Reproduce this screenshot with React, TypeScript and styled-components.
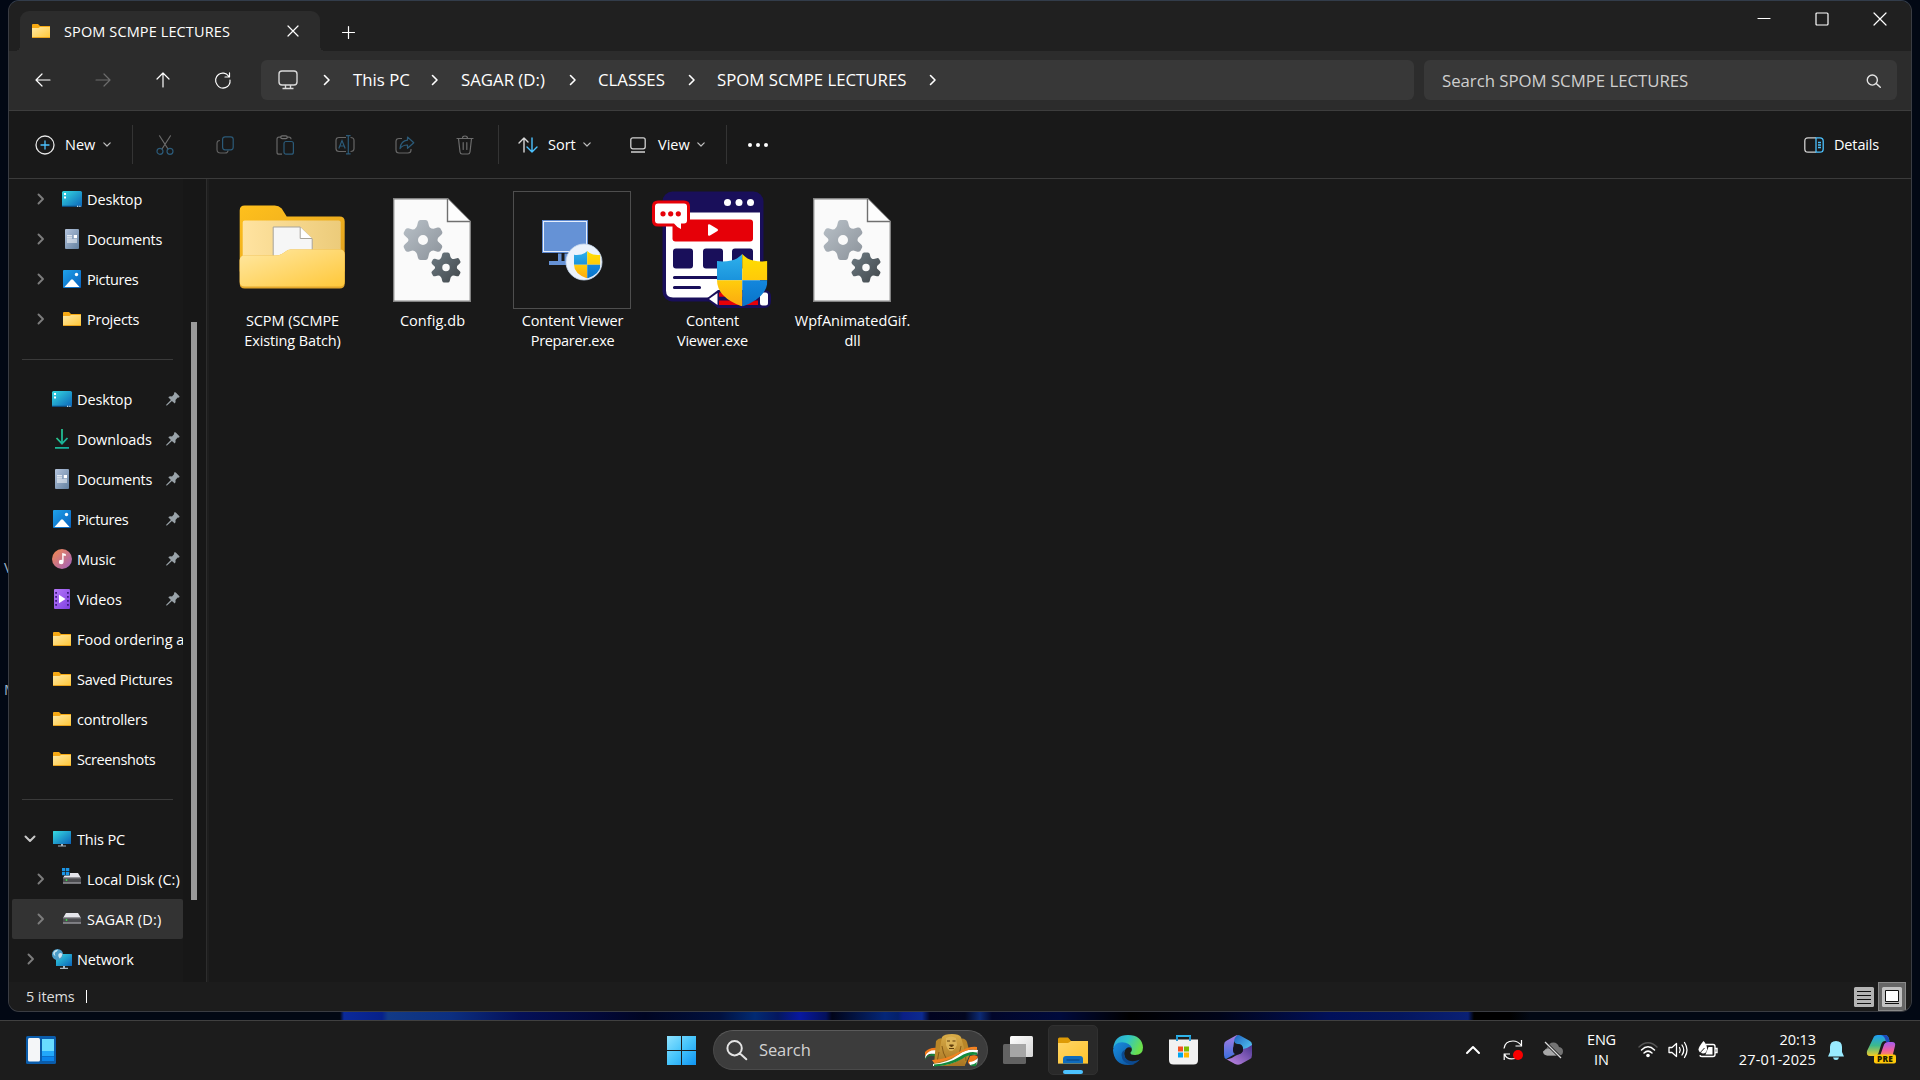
import React from 'react';
import styled, { createGlobalStyle } from 'styled-components';

const Global = createGlobalStyle`
  * { box-sizing: border-box; }
  body { margin: 0; background: #020814; overflow: hidden; }
  svg { display: block; flex: none; overflow: visible; }
`;

/* ---------- shell ---------- */
const Screen = styled.div`
  position: relative;
  width: 1920px;
  height: 1080px;
  display: flex;
  flex-direction: column;
  overflow: hidden;
  font-family: 'Open Sans', 'Noto Sans', sans-serif;
  font-size: 14.5px;
  color: #fff;
  background:
    linear-gradient(90deg, transparent 340px, #0b2a9a 344px, #06208a 382px, #123a86 388px, #0c2f80 450px,
      #041058 520px, #020838 600px, #000522 645px, #01113f 720px, #022a72 755px, #04175e 778px, #0818a0 800px,
      #03105c 826px, #010418 832px, #042678 885px, #03206a 898px, #0b1f86 903px, #0c2a90 922px, #010320 930px,
      #02061f 965px, #0c2a74 980px, #01062a 992px, #000a3c 1060px, #000 1130px, #000419 1220px, #01105a 1330px,
      #04165e 1400px, #0a2074 1468px, #000 1474px, #000 1510px, #020814 1530px, transparent 1560px) 0 1012px / 100% 8px no-repeat,
    #020814;
`;
const DesktopLabel = styled.span<{ $top: number }>`
  position: absolute;
  left: 4px;
  top: ${p => p.$top}px;
  line-height: 18px;
  color: #9fb4c8;
`;
const Window = styled.div`
  position: relative;
  margin-left: 8px;
  width: 1904px;
  height: 1012px;
  border: 1px solid #3a3c42;
  border-top-color: #323c4a;
  border-radius: 11px;
  overflow: hidden;
  display: flex;
  flex-direction: column;
  background: #191919;
`;
const Label = styled.span<{ $ls?: number; $size?: number; $color?: string; $weight?: number }>`
  white-space: nowrap;
  letter-spacing: ${p => p.$ls ?? 0}px;
  font-size: ${p => p.$size ?? 14.5}px;
  color: ${p => p.$color ?? '#fff'};
  font-weight: ${p => p.$weight ?? 400};
  line-height: 20px;
`;
const TabLabel = styled(Label)`padding-top: 1px;`;

/* ---------- title bar ---------- */
const TitleBar = styled.div`
  height: 50px;
  flex: none;
  display: flex;
  align-items: flex-start;
  background: #202020;
  padding-left: 11px;
`;
const Tab = styled.div`
  position: relative;
  margin-top: 10px;
  width: 300px;
  height: 40px;
  border-radius: 9px 9px 0 0;
  background: #2c2c2c;
  display: flex;
  align-items: center;
  padding: 0 21px 0 12px;
  gap: 14px;
  &::before, &::after {
    content: '';
    position: absolute;
    bottom: 0;
    width: 5px;
    height: 5px;
  }
  &::before { left: -5px; background: radial-gradient(circle at 0 0, transparent 5px, #2c2c2c 5px); }
  &::after { right: -5px; background: radial-gradient(circle at 100% 0, transparent 5px, #2c2c2c 5px); }
`;
const Spacer = styled.div`flex: 1;`;
const NewTab = styled.div`margin: 25px 0 0 22px;`;
const Caption = styled.div`
  display: flex;
  gap: 44px;
  margin: 11px 24px 0 0;
`;

/* ---------- address row ---------- */
const NavRow = styled.div`
  height: 60px;
  flex: none;
  background: #2c2c2c;
  border-bottom: 1px solid #3d3d3d;
  display: flex;
  align-items: center;
  padding-right: 14px;
`;
const NavButtons = styled.div`
  display: flex;
  width: 252px;
  padding: 0 0 1px 4px;
`;
const NavButton = styled.div`
  width: 60px;
  height: 40px;
  display: grid;
  place-items: center;
`;
const Field = styled.div<{ $w: number }>`
  width: ${p => p.$w}px;
  height: 40px;
  margin-bottom: 1px;
  border-radius: 6px;
  background: #383838;
  display: flex;
  align-items: center;
`;
const AddressField = styled(Field)`padding-left: 17px; margin-right: 10px;`;
const SearchField = styled(Field)`padding: 1px 16px 0 18px; justify-content: space-between;`;
const DeviceIcon = styled.svg`margin-right: 25px;`;
const Crumb = styled.span<{ $w: number }>`
  width: ${p => p.$w}px;
  font-size: 16.8px;
  line-height: 24px;
  white-space: nowrap;
`;
const CrumbArrow = styled.span<{ $gap: number }>`margin-right: ${p => p.$gap}px;`;

/* ---------- command bar ---------- */
const CommandBar = styled.div`
  height: 68px;
  flex: none;
  background: #191919;
  border-bottom: 1px solid #3b3b3b;
  display: flex;
  align-items: center;
  padding: 0 33px 0 26px;
`;
const Command = styled.div<{ $w: number; $gap: number }>`
  width: ${p => p.$w}px;
  display: flex;
  align-items: center;
  gap: ${p => p.$gap}px;
`;
const CommandText = styled(Label)<{ $pull?: number }>`
  padding-top: 1px;
  margin-right: -${p => p.$pull ?? 3}px;
`;
const Divider = styled.div<{ $after: number }>`
  width: 1px;
  height: 39px;
  background: #343434;
  margin-right: ${p => p.$after}px;
`;
const IconCommands = styled.div`
  display: flex;
  width: 365px;
  padding-left: 2px;
`;
const IconCell = styled.div`
  width: 60px;
  height: 24px;
  display: grid;
  place-items: center;
`;

/* ---------- body ---------- */
const Body = styled.div`
  flex: 1;
  display: flex;
  min-height: 0;
`;
const Sidebar = styled.div`
  width: 174px;
  padding-left: 3px;
  flex: none;
  overflow: hidden;
`;
const SideRow = styled.div<{ $on?: boolean }>`
  height: 40px;
  width: 171px;
  border-radius: 2px;
  background: ${p => (p.$on ? '#333333' : 'transparent')};
  display: flex;
  align-items: center;
  overflow: hidden;
`;
const SideText = styled(Label)`padding-top: 2px;`;
const Expander = styled.span<{ $nested?: boolean; $open?: boolean }>`
  width: ${p => (p.$nested ? 50 : 40)}px;
  padding-left: ${p => (p.$nested ? 25 : p.$open ? 12 : 15)}px;
  flex: none;
`;
const IconSlot = styled.span`
  width: 20px;
  height: 22px;
  margin: -1px 5px 0 0;
  flex: none;
  display: grid;
  place-items: center;
`;
const Pin = styled.span`margin: 0 3px 0 auto;`;
const Rule = styled.div`
  height: 40px;
  padding: 20px 10px 0 10px;
  width: 171px;
  &::after { content: ''; display: block; height: 1px; background: #3a3a3a; }
`;
const ScrollTrack = styled.div`
  width: 23px;
  background: #171717;
  padding: 143px 0 0 8px;
`;
const Thumb = styled.div`
  width: 6px;
  height: 578px;
  background: #9a9a9a;
`;
const Splitter = styled.div`
  width: 3px;
  background: #1e1e1e;
  border-left: 1px solid #2d2d2d;
`;
const Files = styled.div`
  display: flex;
  padding: 12px 0 0 13px;
`;
const File = styled.div`
  width: 140px;
  display: flex;
  flex-direction: column;
  align-items: center;
`;
const FileText = styled(Label)`padding-left: 1px;`;
const Thumbnail = styled.div<{ $framed?: boolean }>`
  width: 118px;
  height: 118px;
  border: 1px solid ${p => (p.$framed ? '#4e4e4e' : 'transparent')};
  margin-bottom: 2px;
  display: grid;
  place-items: center;
`;

/* ---------- status bar ---------- */
const StatusBar = styled.div`
  height: 29px;
  flex: none;
  background: #1c1c1c;
  display: flex;
  align-items: center;
  padding-left: 17px;
`;
const Caret = styled.div`width: 1px; height: 13px; margin-left: 11px; background: #fff;`;
const ViewToggle = styled.div<{ $on?: boolean }>`
  width: 28px;
  height: 29px;
  display: grid;
  place-items: center;
  background: ${p => (p.$on ? '#666' : 'transparent')};
  border: 1px solid ${p => (p.$on ? '#8a8a8a' : 'transparent')};
  margin-right: ${p => (p.$on ? 5 : 0)}px;
`;

/* ---------- taskbar ---------- */
const Taskbar = styled.div`
  margin-top: 8px;
  height: 60px;
  background: #1c1c1c;
  border-top: 1px solid #404040;
  display: flex;
  align-items: center;
  padding: 0 0 1px 26px;
`;
const StartSlot = styled.div`margin-left: 611px;`;
const SearchPill = styled.div`
  margin-left: 17px;
  width: 275px;
  height: 40px;
  border-radius: 20px;
  background: #3c3c3c;
  border: 1px solid #4a4a4a;
  border-top-color: #5a5a5a;
  display: flex;
  align-items: center;
  padding: 0 8px 0 13px;
`;
const PillText = styled(Label)`margin-left: 12px; flex: 1;`;
const Apps = styled.div`
  display: flex;
  margin-left: 5px;
  gap: 5px;
`;
const AppButton = styled.div<{ $on?: boolean }>`
  width: 50px;
  height: 50px;
  position: relative;
  display: grid;
  place-items: center;
  border-radius: 5px;
  background: ${p => (p.$on ? '#292929' : 'transparent')};
  border: 1px solid ${p => (p.$on ? '#303030' : 'transparent')};
`;
const Indicator = styled.div`
  position: absolute;
  left: 14px;
  bottom: 0;
  width: 20px;
  height: 4px;
  border-radius: 2px;
  background: #4cc2ff;
`;
const Tray = styled.div`
  margin-left: 193px;
  display: flex;
  align-items: center;
`;
const TraySlot = styled.div<{ $w: number }>`
  width: ${p => p.$w}px;
  display: grid;
  place-items: center;
`;
const Stack = styled.div<{ $w: number; $align: string }>`
  width: ${p => p.$w}px;
  display: flex;
  flex-direction: column;
  align-items: ${p => p.$align};
`;

/* ---------- icons ---------- */
const Line = ({ w, h, d, c = '#fff', s = 1.2 }: { w: number; h: number; d: string; c?: string; s?: number }) => (
  <svg width={w} height={h} viewBox={`0 0 ${w} ${h}`} fill="none" stroke={c} strokeWidth={s} strokeLinecap="round" strokeLinejoin="round">
    <path d={d} />
  </svg>
);

const GradientSheet = styled.svg`position: absolute;`;
const Defs = () => (
  <GradientSheet width="0" height="0">
    <defs>
      <linearGradient id="fold" x1="0" y1="0" x2="1" y2="1"><stop offset="0" stopColor="#ffe8a3" /><stop offset="1" stopColor="#ffc83a" /></linearGradient>
      <linearGradient id="foldBack" x1="0" y1="0" x2="1" y2="1"><stop offset="0" stopColor="#ffc01c" /><stop offset="1" stopColor="#e0a020" /></linearGradient>
      <linearGradient id="foldIn" x1="0" y1="0" x2="1" y2="0"><stop offset="0" stopColor="#ffe3a0" /><stop offset="1" stopColor="#eccb7a" /></linearGradient>
      <linearGradient id="screen" x1="0" y1="0" x2="1" y2="1"><stop offset="0" stopColor="#36dbe2" /><stop offset="1" stopColor="#0b62b8" /></linearGradient>
      <linearGradient id="pic" x1="0" y1="0" x2="1" y2="1"><stop offset="0" stopColor="#1fa2ea" /><stop offset="1" stopColor="#0860bd" /></linearGradient>
      <linearGradient id="doc" x1="0" y1="0" x2="1" y2="1"><stop offset="0" stopColor="#b4c4dc" /><stop offset="1" stopColor="#62809f" /></linearGradient>
      <linearGradient id="down" x1="0" y1="0" x2="1" y2="1"><stop offset="0" stopColor="#2cc58a" /><stop offset="1" stopColor="#10a9a0" /></linearGradient>
      <linearGradient id="music" x1="0" y1="0" x2="1" y2="1"><stop offset="0" stopColor="#f78a4c" /><stop offset="1" stopColor="#9d5fc0" /></linearGradient>
      <linearGradient id="video" x1="0" y1="0" x2="1" y2="1"><stop offset="0" stopColor="#b678fa" /><stop offset="1" stopColor="#7e3fe0" /></linearGradient>
      <linearGradient id="gearA" x1="0" y1="0" x2="1" y2="1"><stop offset="0" stopColor="#b9c1c8" /><stop offset="1" stopColor="#8b929a" /></linearGradient>
      <linearGradient id="gearB" x1="0" y1="0" x2="1" y2="1"><stop offset="0" stopColor="#6e7b83" /><stop offset="1" stopColor="#41474b" /></linearGradient>
      <linearGradient id="shBlueA" x1="0" y1="0" x2="0" y2="1"><stop offset="0" stopColor="#2fb1ec" /><stop offset="1" stopColor="#1a93dc" /></linearGradient>
      <linearGradient id="shBlueB" x1="0" y1="0" x2="0" y2="1"><stop offset="0" stopColor="#1387dd" /><stop offset="1" stopColor="#0873c8" /></linearGradient>
      <linearGradient id="shYelA" x1="0" y1="0" x2="0" y2="1"><stop offset="0" stopColor="#ffe000" /><stop offset="1" stopColor="#ffc90a" /></linearGradient>
      <linearGradient id="shYelB" x1="0" y1="0" x2="0" y2="1"><stop offset="0" stopColor="#ffcd0c" /><stop offset="1" stopColor="#fba910" /></linearGradient>
      <linearGradient id="win" x1="0" y1="0" x2="29" y2="29" gradientUnits="userSpaceOnUse"><stop offset="0" stopColor="#8fe3ff" /><stop offset=".5" stopColor="#45c4fb" /><stop offset="1" stopColor="#0f94f2" /></linearGradient>
      <linearGradient id="edgeTop" x1="0" y1="0" x2="1" y2=".35"><stop offset="0" stopColor="#2aa5dc" /><stop offset=".5" stopColor="#2fc5c8" /><stop offset="1" stopColor="#6be04c" /></linearGradient>
      <linearGradient id="edgeLow" x1="0" y1="0" x2="1" y2="1"><stop offset="0" stopColor="#1a8fe0" /><stop offset="1" stopColor="#0a4f9c" /></linearGradient>
      <linearGradient id="m1" x1="0" y1="0" x2="1" y2="1"><stop offset="0" stopColor="#1f5fc0" /><stop offset="1" stopColor="#5cd8f8" /></linearGradient>
      <linearGradient id="m2" x1="0" y1="0" x2="0" y2="1"><stop offset="0" stopColor="#a97be0" /><stop offset="1" stopColor="#3a6fe0" /></linearGradient>
      <linearGradient id="m3" x1="0" y1="1" x2="1" y2="0"><stop offset="0" stopColor="#c58be8" /><stop offset="1" stopColor="#4a3590" /></linearGradient>
      <linearGradient id="cop1" x1="0" y1="0" x2="0" y2="1"><stop offset="0" stopColor="#1f9df5" /><stop offset=".5" stopColor="#3cb98c" /><stop offset="1" stopColor="#f2cb28" /></linearGradient>
      <linearGradient id="cop2" x1="0" y1="0" x2="0" y2="1"><stop offset="0" stopColor="#a45cf0" /><stop offset=".6" stopColor="#ef5f9c" /><stop offset="1" stopColor="#f89058" /></linearGradient>
      <linearGradient id="tv1" x1="0" y1="0" x2="1" y2="1"><stop offset="0" stopColor="#fff" /><stop offset="1" stopColor="#d5d5d5" /></linearGradient>
      <linearGradient id="lion" x1="0" y1="0" x2="0" y2="1"><stop offset="0" stopColor="#d8ac48" /><stop offset="1" stopColor="#a87422" /></linearGradient>
    </defs>
  </GradientSheet>
);

const FolderSmall = () => (
  <svg width="18" height="14" viewBox="0 0 18 14">
    <path d="M0 1a1 1 0 011-1h5l2 2h10v4H0z" fill="#f7a912" />
    <path d="M0 4h6.500l1.500-1H18v10.500H0z" fill="url(#fold)" />
    <path d="M0 13.500h18" stroke="#e8a21c" />
  </svg>
);
const DesktopIcon = () => (
  <svg width="20" height="16" viewBox="0 0 20 16">
    <rect width="20" height="16" rx="1.500" fill="url(#screen)" />
    <path d="M2 2h2v2H2zM2 5.500h2v2H2z" fill="#fff" />
    <path d="M0 14.700h20v.8a.5.5 0 01-.5.5H.5a.5.5 0 01-.5-.5z" fill="#0c4c80" />
    <path d="M15 14.700h1.200v1H15zM17.300 14.700h1.200v1h-1.200z" fill="#fff" />
  </svg>
);
const DocumentIcon = () => (
  <svg width="14" height="20" viewBox="0 0 14 20">
    <rect width="14" height="20" rx="1" fill="url(#doc)" />
    <path d="M2 6.800h5M2 8.900h5M2 11h10M2 13h10" stroke="#fff" strokeWidth="1" />
    <path d="M8.800 6H12v3.200H8.800z" fill="#fff" />
  </svg>
);
const PictureIcon = () => (
  <svg width="18" height="18" viewBox="0 0 18 18">
    <rect width="18" height="18" rx="1" fill="url(#pic)" />
    <circle cx="13.500" cy="4.500" r="1.700" fill="#fff" />
    <path d="M1.500 17l6.500-7.200q1-1 2 0L16.500 17z" fill="#fff" />
  </svg>
);
const DownloadIcon = () => (
  <svg width="14" height="20" viewBox="0 0 14 20" fill="none" stroke="url(#down)">
    <path d="M1.500 9L7 14.700 12.500 9" strokeWidth="1.800" />
    <path d="M6.100 0h1.800v14.500H6.100zM0 18h14v1.700H0z" fill="url(#down)" stroke="none" />
  </svg>
);
const MusicIcon = () => (
  <svg width="20" height="20" viewBox="0 0 20 20">
    <circle cx="10" cy="10" r="10" fill="url(#music)" />
    <path d="M10.200 4l3.600 1v2l-2.200-.6v6.200h-1.400z" fill="#fff" />
    <ellipse cx="9.200" cy="13" rx="2.400" ry="2.200" fill="#fff" />
  </svg>
);
const VideoIcon = () => (
  <svg width="16" height="20" viewBox="0 0 16 20">
    <rect width="16" height="20" rx="1" fill="url(#video)" />
    <path d="M1.200 3h1.800v1.800H1.200zM1.200 7h1.800v1.800H1.200zM1.200 11h1.800v1.800H1.200zM1.200 15h1.800v1.800H1.200zM13 3h1.800v1.800H13zM13 7h1.800v1.800H13zM13 11h1.800v1.800H13zM13 15h1.800v1.800H13z" fill="#3c1a80" />
    <path d="M5 5.800l6.500 4.200L5 14.200z" fill="#fff" />
  </svg>
);
const PcIcon = () => (
  <svg width="18" height="16" viewBox="0 0 18 16">
    <rect width="18" height="13" rx=".6" fill="url(#screen)" />
    <path d="M5 14.500h8v1H5zM8 13h2v1.500H8z" fill="#a9b6c0" />
  </svg>
);
const Drive = ({ system }: { system?: boolean }) => (
  <svg width="18" height="11" viewBox="0 0 18 11">
    <path d="M3 0h12l3 5H0z" fill="#e4e4ea" />
    <path d="M0 4.500h18V10.500H0z" fill="#4c4c50" />
    <path d="M0 10h18" stroke="#b5b5bb" />
    <path d="M0 5h18" stroke="#8b8b90" strokeWidth=".8" />
    <circle cx="3.500" cy="7" r=".9" fill="#3be04a" />
    {system && (
      <>
        <path d="M-2-6h9v8.500h-9z" fill="#191919" />
        <path d="M-1-5h3.300v3.300H-1zM3-5h3.300v3.300H3zM-1-1h3.300v3.300H-1zM3-1h3.300v3.300H3z" fill="#1b95e6" />
      </>
    )}
  </svg>
);
const NetworkIcon = () => (
  <svg width="20" height="20" viewBox="0 0 20 20">
    <rect x="4" y="5" width="16" height="12" rx=".6" fill="url(#screen)" />
    <path d="M8 18.800h8v1.200H8zM11 17h2v2h-2z" fill="#a9b6c0" />
    <circle cx="5.500" cy="5.500" r="5.500" fill="#4c9cc8" />
    <path d="M1 4q2-4 5-3.200-1 2-2.500 2.500T3.500 7Q1.500 6.500 1 4zM6.500 5q2-2 4 0-.5 3-3 4.500Q5.500 7.500 6.500 5z" fill="#c9e4f0" />
  </svg>
);
const PinIcon = () => (
  <svg width="14" height="14" viewBox="0 0 14 14" fill="#9aa3a9">
    <path d="M8.200.5Q9-.2 9.800.6l3.400 3.300q.8.8 0 1.400-.8.500-1.500.3L9.500 8q.5 2.300-.7 3.500L5.900 8.900 1 13.500H.2v-.8L4.900 7.900 2.300 5.300Q3.500 4 6 4.400L8.200 2Q7.800 1.100 8.200.5z" />
  </svg>
);

const FolderLarge = () => (
  <svg width="106" height="84" viewBox="-0.7 2.5 106 84">
    <path d="M0 5Q0 0 5 0h30q4 0 7 3l5 8h53q5 0 5 5v50H0z" fill="url(#foldBack)" />
    <rect x="3" y="15" width="98" height="50" rx="2" fill="url(#foldIn)" />
    <path d="M33.500 21.500h27l12 12V60h-39z" fill="#f6f6f6" stroke="#a7a39a" />
    <path d="M60.500 21.500v11.500h12" fill="#fff" stroke="#a7a39a" />
    <path d="M0 55q0-5 5-5h31q4 0 7-2l3-2q2-2 5-2h49q5 0 5 5v29q0 5-5 5H5q-5 0-5-5z" fill="#e3a72c" />
    <path d="M0 55q0-5 5-5h31q4 0 7-2l3-2q2-2 5-2h49q5 0 5 5v27q0 5-5 5H5q-5 0-5-5z" fill="url(#fold)" />
  </svg>
);
const Gear = ({ x, y, r, fill }: { x: number; y: number; r: number; fill: string }) => (
  <g transform={`translate(${x} ${y}) scale(${r / 20})`}>
    <path fillRule="evenodd" fill={fill} d="M-5-18Q-4.500-20-2.500-20h5Q4.500-20 5-18l1 4q.5 1.500 2.500 2.500l2 .2 4-1.200q2-.5 3 1l1.600 3q.8 1.800-.8 3.200l-3.200 3Q14 0 15 1.500l3.200 3q1.600 1.400.8 3.200l-1.600 3q-1 1.500-3 1l-4-1.200-2 .5Q6 12.500 6 14l-1 4q-.5 2-2.500 2h-5Q-4.500 20-5 18l-1-4q-.5-1.500-2.500-3l-2-.5-4 1.200q-2 .5-3-1l-1.600-3q-.8-1.800.8-3.200l3.200-3q1-1.500 0-3l-3.200-3q-1.600-1.400-.8-3.200l1.600-3q1-1.500 3-1l4 1.200 2-.2Q-6.500-12.500-6-14zM0-5a5 5 0 100 10A5 5 0 100-5z" />
  </g>
);
const ConfigFile = () => (
  <svg width="78" height="104" viewBox="0 0 78 104">
    <path d="M.7.7h54L77.300 23.500v79.800H.7z" fill="#fafafa" stroke="#838383" strokeWidth="1.400" />
    <path d="M54.500.7v22.800h22.800" fill="#fdfdfd" stroke="#6f6f6f" strokeWidth="1.400" />
    <Gear x={30} y={42} r={20} fill="url(#gearA)" />
    <Gear x={53} y={69.500} r={15} fill="url(#gearB)" />
  </svg>
);
const Shield = ({ x, y, s }: { x: number; y: number; s: number }) => (
  <g transform={`translate(${x} ${y}) scale(${s})`}>
    <clipPath id={`shield${s}`}><path d="M25 0q5 5.500 11 6.500 7 1.500 14 .5v19q0 17-25 26Q0 43 0 26V7q7 1 14-.5Q20 5.500 25 0z" /></clipPath>
    <g clipPath={`url(#shield${s})`}>
      <path d="M0 0h25v26H0z" fill="url(#shBlueA)" />
      <path d="M25 0h25v26H25z" fill="url(#shYelA)" />
      <path d="M0 26h25v26H0z" fill="url(#shYelB)" />
      <path d="M25 26h25v26H25z" fill="url(#shBlueB)" />
    </g>
  </g>
);
const PreparerIcon = () => (
  <svg width="60" height="60" viewBox="0 0 60 60">
    <rect x=".5" y=".5" width="45" height="32" fill="#6592d6" stroke="#5f8ad0" />
    <rect x="1.500" y="1.500" width="43" height="30" fill="none" stroke="#e6eefb" />
    <path d="M16 33.500h3.500V41H16zM22.500 33.500H26V41h-3.500zM7 41h25v4H7z" fill="#6592d6" />
    <circle cx="42" cy="42" r="18" fill="#eaf2fc" stroke="#c3d6ec" strokeWidth=".8" />
    <Shield x={32} y={31} s={0.53} />
  </svg>
);
const ViewerIcon = () => (
  <svg width="116" height="116" viewBox="2 0.5 116 116">
    <rect x="10.500" y="0" width="101" height="110" rx="10" fill="#190f5a" />
    <path d="M14 21h94v85H21q-7 0-7-7z" fill="#fff" />
    <g fill="#fff"><circle cx="75.500" cy="11" r="3.500" /><circle cx="87" cy="11" r="3.500" /><circle cx="98.500" cy="11" r="3.500" /></g>
    <rect x="20.500" y="28" width="80.500" height="22" rx="3" fill="#e60008" />
    <path d="M56 34q0-2 2-1l7.500 4.500q1.200 1 0 2L58 44q-2 1-2-1z" fill="#fff" />
    <path d="M24 57h14q3 0 3 3v14q0 3-3 3H24q-3 0-3-3V60q0-3 3-3zM54 57h14q3 0 3 3v14q0 3-3 3H54q-3 0-3-3V60q0-3 3-3zM83 57h15q3 0 3 3v14q0 3-3 3H83q-3 0-3-3V60q0-3 3-3z" fill="#190f5a" />
    <path d="M22.500 86H80M22.500 96h25" stroke="#190f5a" strokeWidth="3.200" strokeLinecap="round" />
    <path d="M5 9h27q6 0 6 6v14q0 6-6 6h-1v5q-5-1-9-5H6q-6 0-6-6V15q0-6 6-6z" fill="#e60008" />
    <path d="M6 12h26q3 0 3 3v14q0 3-3 3h-3v5.500Q25 36 22 32H6q-3 0-3-3V15q0-3 3-3z" fill="#fff" />
    <g fill="#e60008"><circle cx="11" cy="22.300" r="2.600" /><circle cx="18.700" cy="22.300" r="2.600" /><circle cx="26.300" cy="22.300" r="2.600" /></g>
    <path d="M54 107.500L66 98.500h46q7 0 7 7v4q0 7-7 7H66z" fill="#190f5a" />
    <path d="M57 107.500l8.500-6v12z" fill="#fff" />
    <path d="M67 101h39v4.300H67zM67 109h39v4.500H67z" fill="#e60008" />
    <rect x="108" y="101" width="8" height="13" rx="2.500" fill="#fff" />
    <Shield x={65} y={62.500} s={1.01} />
  </svg>
);
const Emblem = () => (
  <svg width="55" height="33" viewBox="0 0 55 33">
    <path d="M1 25Q1 14 13 14l-1 7q-8-4-11 4z" fill="#fff" />
    <path d="M1 18Q6 13 14 14l-1 2.500Q5 15 1 22z" fill="#f07818" />
    <path d="M1 25Q4 19 12 20l-1 2.500Q4 20 1 26z" fill="#188038" />
    <path d="M12 7q3-4 8-2l1 26H10z" fill="#b98628" />
    <path d="M35 5q6-2 8 3l3 12-5 11h-7z" fill="#b98628" />
    <path d="M18 3q2-3 10-3 7 0 9 3l3 11 1 18H13l3-18z" fill="url(#lion)" />
    <path d="M22 4q5-3 10 0l1 7q-3 6-6 6t-5-6z" fill="#dcb458" />
    <path d="M23 7h3M28.500 7h3M25.500 11h4l-2 2zM25 14.500h5" stroke="#5f3d0c" strokeWidth="1" fill="#5f3d0c" />
    <path d="M18 12q1 8 4 12M37 12q-1 8-4 12M15 18l-2 10M41 15l1 12" stroke="#7f5514" strokeWidth=".9" fill="none" />
    <path d="M9 30q14-1 25-9 10-7 20-5l-1 5q-8-2-16 4-11 7-28 7z" fill="#fff" />
    <path d="M8 26q16-1 27-8 10-6 18-5v3q-9-2-18 4-11 7-25 9z" fill="#f58220" />
    <path d="M10 30.500q15-1 26-8 9-6 17-4v2.500q-8-1-15 4-12 7-28 7.500z" fill="#138a3c" />
    <path d="M46 22q6-2 8 1l-6 8q-5-1-4-4z" fill="#f07818" />
    <path d="M45 28q5 0 9-4l-1 6q-3 3-7 1z" fill="#fff" /><path d="M46 31q4 0 7-3l-1 4q-3 1-6-1z" fill="#138a3c" />
  </svg>
);
const EdgeIcon = () => (
  <svg width="30" height="30" viewBox="0 0 30 30">
    <path d="M.3 13Q1.500 0 15 0q14 0 15 12.500 0 7.500-8 7.500-5 0-4.500-2.500Q20 15 18 12 13 6.500.3 13z" fill="url(#edgeTop)" />
    <path d="M0 15Q1 7.500 9 7.200q8 .3 10 6-4-2.500-6.500 1-2.800 5 .5 10 3.500 4.500 8.500 5Q18.500 30 15 30 1 29.500 0 15z" fill="url(#edgeLow)" />
    <path d="M12.500 14.500q-3 4 0 8.500 5 5.500 14.500 1.500-4.500 5-9.500 5-8.500-1.500-9-9.500 0-4 4-5.500z" fill="#0c4a90" />
  </svg>
);
const StoreIcon = () => (
  <svg width="29" height="30" viewBox="0 0 29 30">
    <path d="M8 6V1h13v5" fill="none" stroke="#2fb4ea" strokeWidth="2" />
    <path d="M0 4.500h29V25q0 4.500-4.500 4.500h-20Q0 29.500 0 25z" fill="#f1f1f1" />
    <path d="M8 1.500V6M21 1.500V6" stroke="#1b93cf" strokeWidth="1.800" />
    <path d="M9 11.500h5v5H9z" fill="#f25022" /><path d="M15 11.500h5v5h-5z" fill="#7fba00" />
    <path d="M9 17.500h5v5H9z" fill="#00a4ef" /><path d="M15 17.500h5v5h-5z" fill="#ffb900" />
  </svg>
);
const M365Icon = () => (
  <svg width="28" height="30" viewBox="0 0 28 30">
    <path d="M14 0q1.500 0 3 1l9 5q2 1 2 3.500V19l-9-5q0-5-5-5-3 0-4-3Q9 2 14 0z" fill="url(#m1)" />
    <path d="M14 0Q10 2 10 7l-1 8q0 3 2 4l-9 5Q0 23 0 20V10q0-3 2-4l9-5q1.500-1 3-1z" fill="url(#m2)" />
    <path d="M28 10v10q0 3-2 4l-9 5q-3 1.500-6 0l-9-5q4 1 9-3l4-2q4-1 4-5 5-1 9-4z" fill="url(#m3)" />
    <circle cx="14" cy="14.500" r="5" fill="#171522" />
  </svg>
);
const ExplorerIcon = () => (
  <svg width="30" height="27" viewBox="0 0 30 27">
    <path d="M0 2Q0 .5 1.500.5H10L13 4h17v6H0z" fill="#dd9a06" />
    <path d="M0 6h9.500q1.500 0 2.500-1l1-1h17v22.500H0z" fill="url(#fold)" />
    <path d="M0 6h9.500q1.500 0 2.500-1l1-1h17v22.500H0z" fill="#ffbf1c" opacity=".45" />
    <path d="M5 26.500V22q0-3 3-3h14q3 0 3 3v4.500z" fill="#0f6cbd" />
    <path d="M8.500 23h13" stroke="#0a4a88" strokeWidth="1.300" />
  </svg>
);
const CopilotIcon = () => (
  <svg width="30" height="31" viewBox="0 0 30 31">
    <path d="M7 1.500Q8 0 10.500 0H18q3 0 4 4l.5 2H18q-3 0-4 4l-2.500 8q-1 3-4 3H3q-4 0-3-5z" fill="url(#cop1)" />
    <path d="M14 0h4q3 0 4 4l.5 3H19q-1-6-5-7z" fill="#1d49b8" />
    <path d="M16.500 11q1-4 5-4H25q4 0 3 4l-2.500 10H13z" fill="url(#cop2)" />
    <rect x="7" y="19.500" width="22" height="9" rx="2" fill="#ffc709" />
    <text x="18" y="27.200" textAnchor="middle" fontSize="8.200" fontWeight="800" fontFamily="Open Sans, sans-serif" fill="#201a00" letterSpacing=".3">PRE</text>
  </svg>
);
const Magnifier = ({ size, s }: { size: number; s: number }) => (
  <Line w={size} h={size} s={s} c="#e4e4e4" d={`M${size * 0.38} 1a${size * 0.36} ${size * 0.36} 0 100 ${size * 0.72}a${size * 0.36} ${size * 0.36} 0 000-${size * 0.72}M${size * 0.65} ${size * 0.67}L${size - 0.7} ${size - 0.7}`} />
);

const CHEV_R = 'M1.500 1.500L6 6L1.500 10.500';
const CHEV_D = 'M.8.8L4 4L7.200.8';

/* ---------- data ---------- */
type Row = { t: string; ls?: number; icon: React.ReactNode; nested?: boolean; arrow?: 'r' | 'd'; pin?: boolean; on?: boolean };
const quick: Row[] = [
  { t: 'Desktop', ls: -0.1, icon: <DesktopIcon />, nested: true, arrow: 'r' },
  { t: 'Documents', ls: -0.28, icon: <DocumentIcon />, nested: true, arrow: 'r' },
  { t: 'Pictures', ls: -0.4, icon: <PictureIcon />, nested: true, arrow: 'r' },
  { t: 'Projects', ls: -0.25, icon: <FolderSmall />, nested: true, arrow: 'r' },
];
const pinned: Row[] = [
  { t: 'Desktop', ls: -0.1, icon: <DesktopIcon />, pin: true },
  { t: 'Downloads', ls: -0.08, icon: <DownloadIcon />, pin: true },
  { t: 'Documents', ls: -0.28, icon: <DocumentIcon />, pin: true },
  { t: 'Pictures', ls: -0.4, icon: <PictureIcon />, pin: true },
  { t: 'Music', ls: -0.2, icon: <MusicIcon />, pin: true },
  { t: 'Videos', icon: <VideoIcon />, pin: true },
  { t: 'Food ordering a', icon: <FolderSmall /> },
  { t: 'Saved Pictures', ls: -0.22, icon: <FolderSmall /> },
  { t: 'controllers', ls: -0.2, icon: <FolderSmall /> },
  { t: 'Screenshots', ls: -0.4, icon: <FolderSmall /> },
];
const drives: Row[] = [
  { t: 'This PC', ls: -0.15, icon: <PcIcon />, arrow: 'd' },
  { t: 'Local Disk (C:)', icon: <Drive system />, nested: true, arrow: 'r' },
  { t: 'SAGAR (D:)', ls: 0.2, icon: <Drive />, nested: true, arrow: 'r', on: true },
  { t: 'Network', ls: -0.15, icon: <NetworkIcon />, arrow: 'r' },
];
const files: { lines: [string, number?][]; icon: React.ReactNode; framed?: boolean }[] = [
  { lines: [['SCPM (SCMPE', -0.05], ['Existing Batch)', -0.12]], icon: <FolderLarge /> },
  { lines: [['Config.db', 0.05]], icon: <ConfigFile /> },
  { lines: [['Content Viewer', -0.15], ['Preparer.exe', -0.33]], icon: <PreparerIcon />, framed: true },
  { lines: [['Content', -0.15], ['Viewer.exe', -0.25]], icon: <ViewerIcon /> },
  { lines: [['WpfAnimatedGif.'], ['dll']], icon: <ConfigFile /> },
];
const crumbs: { t: string; w: number; gap: number }[] = [
  { t: 'This PC', w: 78, gap: 22 },
  { t: 'SAGAR (D:)', w: 108, gap: 21 },
  { t: 'CLASSES', w: 90, gap: 21 },
  { t: 'SPOM SCMPE LECTURES', w: 212, gap: 22 },
];

const SideItem = ({ row }: { row: Row }) => (
  <SideRow $on={row.on}>
    <Expander $nested={row.nested} $open={row.arrow === 'd'}>
      {row.arrow === 'r' && <Line w={8} h={12} d={CHEV_R} c="#7d7d7d" s={1.9} />}
      {row.arrow === 'd' && <Line w={12} h={8} d="M1.500 1.500L6 6L10.500 1.500" c="#c8c8c8" s={2} />}
    </Expander>
    <IconSlot>{row.icon}</IconSlot>
    <SideText $ls={row.ls}>{row.t}</SideText>
    {row.pin && <Pin><PinIcon /></Pin>}
  </SideRow>
);

export default function App() {
  return (
    <Screen>
      <Global />
      <Defs />
      <DesktopLabel $top={559}>V</DesktopLabel>
      <DesktopLabel $top={681}>M</DesktopLabel>
      <Window>
        <TitleBar>
          <Tab>
            <FolderSmall />
            <TabLabel $weight={500} $ls={0.12}>SPOM SCMPE LECTURES</TabLabel>
            <Spacer />
            <Line w={12} h={12} d="M1 1L11 11M11 1L1 11" />
          </Tab>
          <NewTab><Line w={13} h={13} d="M6.500.5v12M.5 6.500h12" /></NewTab>
          <Spacer />
          <Caption>
            <Line w={14} h={14} d="M1 6.500h12" />
            <Line w={14} h={14} d="M2 1h10q1 0 1 1v10q0 1-1 1H2q-1 0-1-1V2q0-1 1-1z" />
            <Line w={14} h={14} d="M1 1L13 13M13 1L1 13" />
          </Caption>
        </TitleBar>

        <NavRow>
          <NavButtons>
            <NavButton><Line w={16} h={14} d="M15 7H1M7 1L1 7L7 13" /></NavButton>
            <NavButton><Line w={16} h={14} d="M1 7H15M9 1L15 7L9 13" c="#6c6c6c" /></NavButton>
            <NavButton><Line w={14} h={16} d="M7 15V1M1 7L7 1L13 7" /></NavButton>
            <NavButton><Line w={16} h={16} d="M13.500 4A7 7 0 102 12.500A7 7 0 0015 8M14.500.8V5H10" /></NavButton>
          </NavButtons>
          <AddressField $w={1153}>
            <DeviceIcon width="20" height="20" viewBox="0 0 20 20" fill="none" stroke="#d8d8d8" strokeWidth="1.400">
              <rect x="1" y="1" width="18" height="14" rx="3" /><path d="M7.500 15v3M12.500 15v3M4.500 18.500h11" />
            </DeviceIcon>
            <CrumbArrow $gap={22}><Line w={8} h={12} d={CHEV_R} s={1.6} /></CrumbArrow>
            {crumbs.map(({ t, w, gap }) => (
              <React.Fragment key={t}>
                <Crumb $w={w}>{t}</Crumb>
                <CrumbArrow $gap={gap}><Line w={8} h={12} d={CHEV_R} s={1.6} /></CrumbArrow>
              </React.Fragment>
            ))}
          </AddressField>
          <SearchField $w={473}>
            <Label $size={16.8} $color="#cfcfcf" $ls={-0.03}>Search SPOM SCMPE LECTURES</Label>
            <Magnifier size={14} s={1.4} />
          </SearchField>
        </NavRow>

        <CommandBar>
          <Command $w={97} $gap={10}>
            <svg width="20" height="20" viewBox="0 0 20 20" fill="none" strokeWidth="1.300" strokeLinecap="round">
              <circle cx="10" cy="10" r="9" stroke="#e4e4e4" /><path d="M10 6v8M6 10h8" stroke="#4cc2ff" />
            </svg>
            <CommandText $pull={2}>New</CommandText>
            <Line w={8} h={5} d={CHEV_D} c="#bdbdbd" s={1.2} />
          </Command>
          <Divider $after={0} />
          <IconCommands>
            <IconCell>
              <svg width="18" height="20" viewBox="0 0 18 20" fill="none" strokeWidth="1.200" strokeLinecap="round">
                <path d="M3.500.8L12 14M14.500.8L6 14" stroke="#6a6a6a" />
                <circle cx="4" cy="16.300" r="3" stroke="#2b5a78" /><circle cx="14" cy="16.300" r="3" stroke="#2b5a78" />
              </svg>
            </IconCell>
            <IconCell>
              <svg width="18" height="18" viewBox="0 0 18 18" fill="none" strokeWidth="1.200">
                <path d="M4 4.500Q1 4.500 1 7.500v6Q1 17 4.500 17H9q3 0 3-2.500" stroke="#606060" />
                <rect x="6.600" y=".8" width="10.600" height="13" rx="2.500" stroke="#2b5a78" />
              </svg>
            </IconCell>
            <IconCell>
              <svg width="18" height="20" viewBox="0 0 18 20" fill="none" strokeWidth="1.200">
                <path d="M4.500 2.200H3Q1 2.200 1 4.200v13q0 2 2 2h3M11.500 2.200H13q2 0 2 2" stroke="#666" />
                <rect x="4.700" y=".8" width="6.600" height="2.800" rx="1.400" stroke="#707070" />
                <rect x="8" y="6.500" width="9.400" height="12.700" rx="2" stroke="#2b5a78" />
              </svg>
            </IconCell>
            <IconCell>
              <svg width="20" height="20" viewBox="0 0 20 20" fill="none" strokeWidth="1.200">
                <path d="M11 2.500H4Q1 2.500 1 5.500v8q0 3 3 3h7M15.500 2.500q3.500 0 3.500 3v8q0 3-3.500 3" stroke="#666" />
                <path d="M13.300.7v18M11 .7h4.600M11 18.900h4.600M3.800 13.500L7 5.500l3.200 8M5 11h4.200" stroke="#2b5a78" />
              </svg>
            </IconCell>
            <IconCell>
              <svg width="20" height="18" viewBox="0 0 20 18" fill="none" strokeWidth="1.200" strokeLinejoin="round">
                <path d="M7 2.500H4q-3 0-3 3V14q0 3 3 3h9q3 0 3-3v-1" stroke="#666" />
                <path d="M12.500 1l6.300 5.700-6.300 5.600V9Q8 8.800 5 12.500 6 4.600 12.500 4.200z" stroke="#2b5a78" />
              </svg>
            </IconCell>
            <IconCell><Line w={18} h={20} c="#6c6c6c" s={1.2} d="M1 3.500h16M6.500 3.200Q6.500 1 9 1t2.500 2.200M2.500 3.800L4 17q.3 2 2 2h6q1.700 0 2-2l1.500-13.200M7.200 7.500v7M10.800 7.500v7" /></IconCell>
          </IconCommands>
          <Divider $after={19} />
          <Command $w={112} $gap={10}>
            <svg width="20" height="16" viewBox="0 0 20 16" fill="none" strokeWidth="1.400" strokeLinecap="round" strokeLinejoin="round">
              <path d="M6 15V1M1 6L6 1L10 5" stroke="#d8d8d8" /><path d="M14 1v14M9 10l5 5 5-5" stroke="#4cc2ff" />
            </svg>
            <CommandText>Sort</CommandText>
            <Line w={8} h={5} d={CHEV_D} c="#bdbdbd" s={1.2} />
          </Command>
          <Command $w={96} $gap={12}>
            <svg width="16" height="16" viewBox="0 0 16 16" fill="none" stroke="#d2d2d2" strokeWidth="1.300">
              <rect x=".8" y=".8" width="14.400" height="11" rx="2" /><path d="M1 15h14" />
            </svg>
            <CommandText $pull={5}>View</CommandText>
            <Line w={8} h={5} d={CHEV_D} c="#bdbdbd" s={1.2} />
          </Command>
          <Divider $after={21} />
          <svg width="20" height="4" viewBox="0 0 20 4" fill="#fff"><circle cx="2" cy="2" r="2" /><circle cx="10" cy="2" r="2" /><circle cx="18" cy="2" r="2" /></svg>
          <Spacer />
          <Command $w={74} $gap={10}>
            <svg width="20" height="16" viewBox="0 0 20 16" fill="none" strokeWidth="1.300">
              <path d="M12 .8H4Q.8.800.8 4v8q0 3.200 3.200 3.200h8" stroke="#d0d0d0" />
              <path d="M12 .8h4q3.200 0 3.200 3.200v8q0 3.200-3.200 3.200h-4zM14 5.500h3M14 8h3M14 10.500h3" stroke="#4cc2ff" />
            </svg>
            <CommandText $ls={-0.15}>Details</CommandText>
          </Command>
        </CommandBar>

        <Body>
          <Sidebar>
            {quick.map((r, i) => <SideItem key={i} row={r} />)}
            <Rule />
            {pinned.map((r, i) => <SideItem key={i} row={r} />)}
            <Rule />
            {drives.map((r, i) => <SideItem key={i} row={r} />)}
          </Sidebar>
          <ScrollTrack><Thumb /></ScrollTrack>
          <Splitter />
          <Files>
            {files.map((f, i) => (
              <File key={i}>
                <Thumbnail $framed={f.framed}>{f.icon}</Thumbnail>
                {f.lines.map(([t, ls]) => <FileText key={t} $ls={ls}>{t}</FileText>)}
              </File>
            ))}
          </Files>
        </Body>

        <StatusBar>
          <Label $color="#dedede" $ls={-0.1}>5 items</Label>
          <Caret />
          <Spacer />
          <ViewToggle>
            <svg width="20" height="20" viewBox="0 0 20 20"><rect width="20" height="20" rx="1.500" fill="#b4b4b4" /><path d="M3 4.500h14M3 8.500h14M3 12.500h14M3 16.500h14" stroke="#111" /></svg>
          </ViewToggle>
          <ViewToggle $on>
            <svg width="20" height="20" viewBox="0 0 20 20"><rect width="20" height="20" rx="1.500" fill="#c2c2c2" /><path d="M3.500 3.500h13v11h-13z" fill="#fff" stroke="#111" /><path d="M3 16.500h14" stroke="#111" /></svg>
          </ViewToggle>
        </StatusBar>
      </Window>

      <Taskbar>
        <svg width="30" height="28" viewBox="0 0 30 28">
          <rect width="30" height="28" rx="1.500" fill="#0a5cab" />
          <rect x="2" y="2" width="12" height="23.500" rx="1.500" fill="#f4f6f8" />
          <path d="M16 3h12v12H16z" fill="#69dcff" /><path d="M16 15h12v5H16z" fill="#22a8fa" /><path d="M16 20.500h12V25H16z" fill="#0b84ea" />
        </svg>
        <StartSlot>
          <svg width="29" height="29" viewBox="0 0 29 29"><path d="M0 0h14v14H0zM15 0h14v14H15zM0 15h14v14H0zM15 15h14v14H15z" fill="url(#win)" /></svg>
        </StartSlot>
        <SearchPill>
          <Magnifier size={20} s={2} />
          <PillText $size={16.5} $color="#d2d2d2" $ls={-0.1}>Search</PillText>
          <Emblem />
        </SearchPill>
        <Apps>
          <AppButton>
            <svg width="30" height="28" viewBox="0 0 30 28">
              <rect x="7" y="0" width="23" height="21" rx="1.500" fill="url(#tv1)" />
              <rect x="0" y="8" width="23" height="20" rx="1.500" fill="#626262" />
              <path d="M7 8h16v13H7z" fill="#a6a6a6" />
            </svg>
          </AppButton>
          <AppButton $on><ExplorerIcon /><Indicator /></AppButton>
          <AppButton><EdgeIcon /></AppButton>
          <AppButton><StoreIcon /></AppButton>
          <AppButton><M365Icon /></AppButton>
        </Apps>
        <Tray>
          <TraySlot $w={34}><Line w={14} h={8} d="M1 7L7 1L13 7" s={2} /></TraySlot>
          <TraySlot $w={46}>
            <svg width="20" height="20" viewBox="0 0 20 20" fill="none" stroke="#fff" strokeWidth="1.200">
              <path d="M1 8.500Q2 1 10 1q5 0 8.500 4.500M18.500 0v6h-6M12 18.500Q4 20.500 1.500 14M1.200 20v-6H7" />
              <circle cx="15" cy="15" r="5" fill="#f80000" stroke="none" />
            </svg>
          </TraySlot>
          <TraySlot $w={34}>
            <svg width="20" height="16" viewBox="0 0 20 16">
              <path d="M4 13.500a4 4 0 010-7.500Q5.500.5 10.500.5q4 0 5.500 4.500 4 .5 4 4.500 0 4-4 4z" fill="#747474" />
              <path d="M0 9.500Q4 5 9 8l8 5.500H4Q0 13 0 9.500z" fill="#a8a8a8" />
              <path d="M2 0l16 16" stroke="#1c1c1c" strokeWidth="3" /><path d="M2 0l16 16" stroke="#dcdcdc" strokeWidth="1.300" />
            </svg>
          </TraySlot>
          <Stack $w={63} $align="center"><Label $ls={-0.2}>ENG</Label><Label>IN</Label></Stack>
          <TraySlot $w={30}>
            <svg width="20" height="16" viewBox="0 0 20 16" fill="none" strokeWidth="1.500" strokeLinecap="round">
              <path d="M1 5Q10-3.500 19 5" stroke="#565656" />
              <path d="M3.500 8Q10 1.500 16.500 8M6 11q4-3.800 8 0" stroke="#fff" /><circle cx="10" cy="13.500" r="1.800" fill="#fff" />
            </svg>
          </TraySlot>
          <TraySlot $w={30}><Line w={20} h={18} s={1.3} d="M1 6.500h3L8.500 2.500v13L4 11.500H1zM11.500 6.500q1.500 2.500 0 5M14 4q3.500 5 0 10M16.500 1.500q5 7.500 0 15" /></TraySlot>
          <TraySlot $w={30}>
            <svg width="20" height="18" viewBox="0 0 20 18" fill="none" stroke="#fff" strokeWidth="1.400">
              <path d="M8 3.500h7q2 0 2 2v8q0 2-2 2H4q-2 0-2-1.500M17.500 7.500H19v4h-1.500" />
              <path d="M10.500 6h4v7.500h-7z" fill="#fff" stroke="none" />
              <path d="M5.500 0Q9.500 4 9 8.500q-.5 4-4 4-4-.5-4.500-4Q.5 6 5.500 0z" fill="#fff" stroke="none" /><path d="M1 14.500Q3 10 6.500 7" stroke="#1c1c1c" strokeWidth="1" />
            </svg>
          </TraySlot>
          <Stack $w={93} $align="flex-end"><Label $ls={-0.1}>20:13</Label><Label $ls={0.15}>27-01-2025</Label></Stack>
          <TraySlot $w={39}>
            <svg width="16" height="19" viewBox="0 0 16 19" fill="#99ebff">
              <path d="M8 0q6 0 6 6v5l2 4.500H0L2 11V6Q2 0 8 0zM5 16.500h6Q10.500 19 8 19t-3-2.500z" />
            </svg>
          </TraySlot>
          <TraySlot $w={53}><CopilotIcon /></TraySlot>
        </Tray>
      </Taskbar>
    </Screen>
  );
}
